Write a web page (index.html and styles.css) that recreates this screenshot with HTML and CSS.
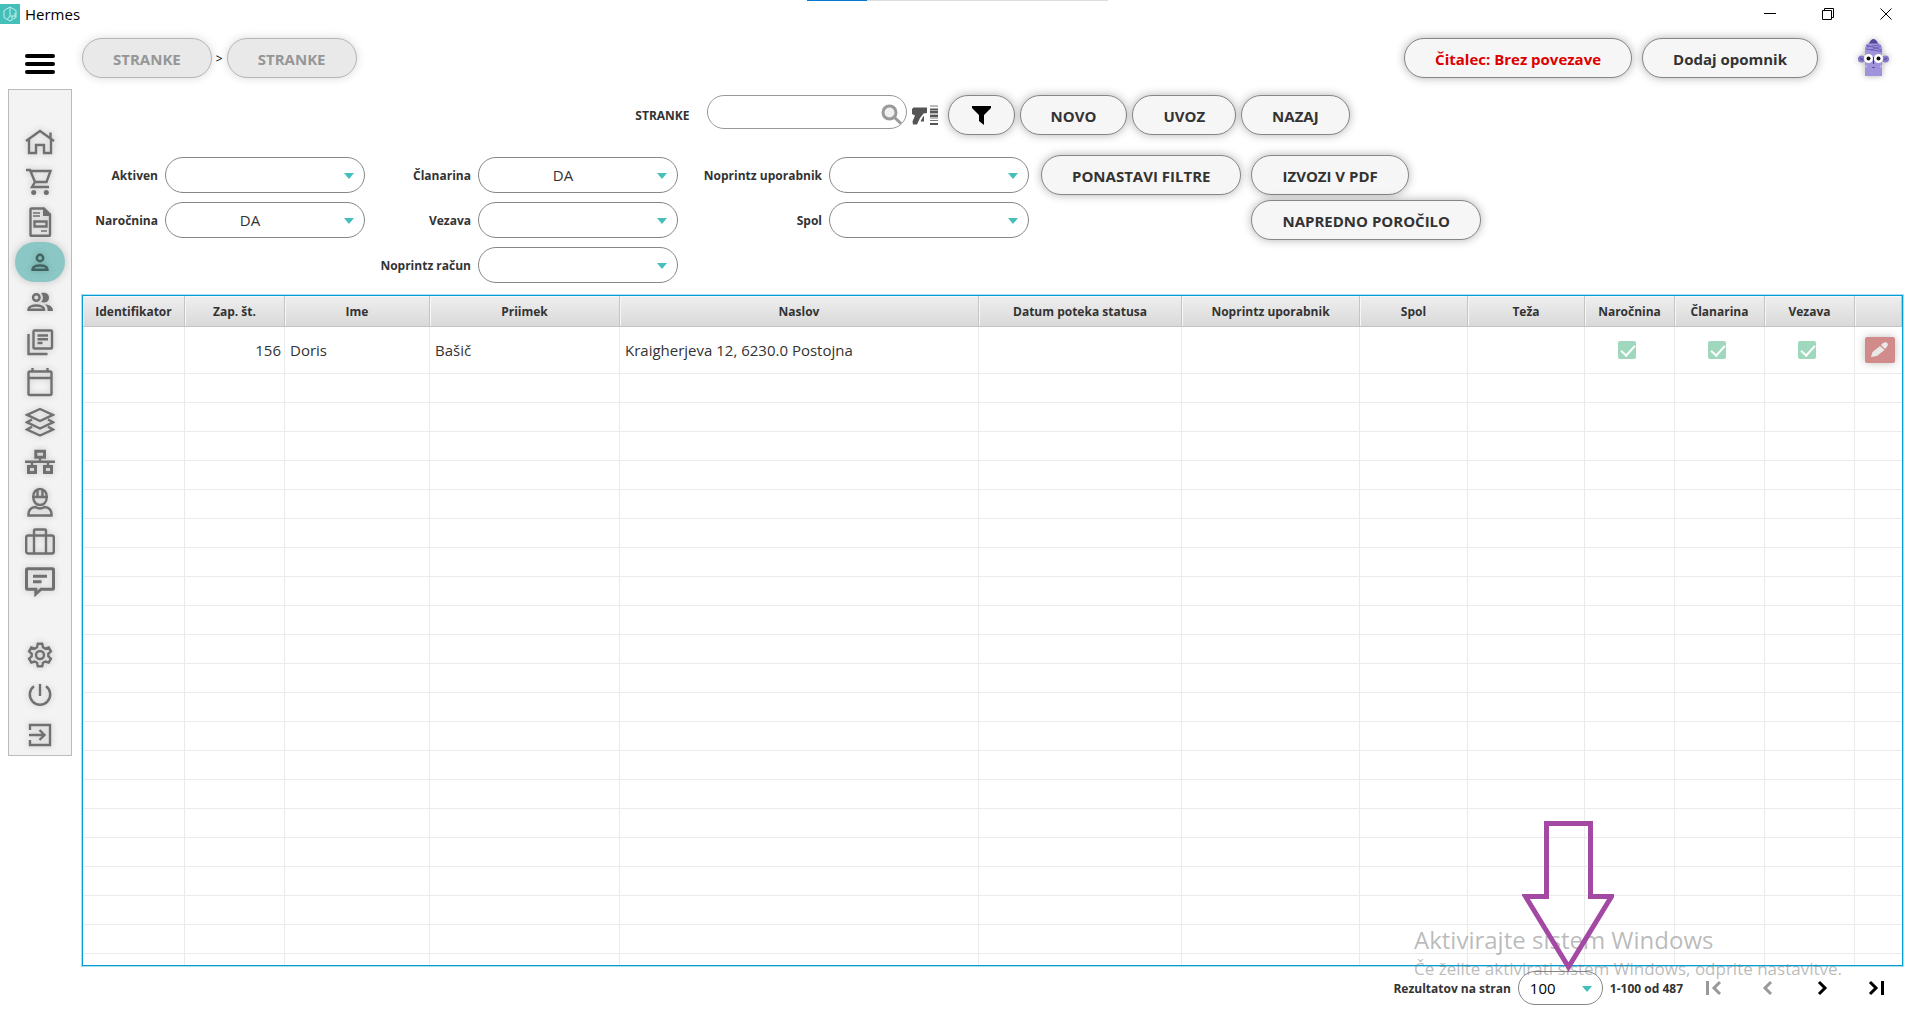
FILE: index.html
```html
<!DOCTYPE html>
<html lang="sl">
<head>
  <meta charset="UTF-8" />
  <meta name="viewport" content="width=device-width, initial-scale=1.0" />
  <title>Hermes</title>
  <link rel="stylesheet" href="styles.css">
</head>
<body>
  <div class="progress"><span></span></div>
  <div class="titlebar">
    <svg class="logo" viewBox="0 0 20 20" width="20" height="20">
      <rect width="20" height="20" fill="#45bfb9"/>
      <path d="M10 3v9M10 3L4 6.500v7L10 17l2-1v-4h-2l-2.500 3M10 3l6 3.500v7l-3 1.500M15 9v4M12 12h3" fill="none" stroke="#c5efec"/>
    </svg>
    <span class="app-name">Hermes</span>
    <div class="window-buttons">
      <button aria-label="Minimiraj"><svg viewBox="0 0 12 12" width="12" height="12"><path d="M0 5.500h12"/></svg></button>
      <button aria-label="Obnovi"><svg viewBox="0 0 12 12" width="12" height="12"><path d="M.5 2.500h9v9h-9zM2.500 2.500v-2h9v9h-2"/></svg></button>
      <button aria-label="Zapri"><svg viewBox="0 0 12 12" width="12" height="12"><path d="M.5.5l11 11M11.500.5l-11 11"/></svg></button>
    </div>
  </div>

  <div class="app">
    <aside>
      <button class="menu-toggle" aria-label="Meni"><span></span><span></span><span></span></button>
      <nav class="sidebar">
        <a href="#" aria-label="Domov"><svg viewBox="0 0 30 30"><path d="M1 14L15 4l14 10M4 12.500V26h7v-8h8v8h7V12.500M25.500 5.500v6"/></svg></a>
        <a href="#" aria-label="Prodaja"><svg viewBox="0 0 30 30"><path d="M1 3h4l5 12-3 5h17M6 4h19.500l-4 11H10"/><circle class="fill" cx="8.700" cy="25.500" r="2.500"/><circle class="fill" cx="21.300" cy="25.500" r="2.500"/></svg></a>
        <a href="#" aria-label="Dokumenti"><svg viewBox="0 0 30 30"><path d="M6.500 1.500H19l6 6V28a.8.8 0 0 1-.8.8H6.300a.8.8 0 0 1-.8-.8V2.500a1 1 0 0 1 1-1zM9.500 14.500h12v5h-12z"/><path class="fill" d="M18 1l8 8h-8z"/><path class="thin" d="M8 6h7M8 9h7M16 24h6"/></svg></a>
        <a href="#" class="active" aria-label="Stranke"><svg viewBox="0 0 30 30"><circle cx="15" cy="11" r="3.200"/><path d="M7.500 22.800c0-3 3.500-4.300 7.500-4.300s7.500 1.300 7.500 4.300z"/></svg></a>
        <a href="#" aria-label="Skupine"><svg viewBox="0 0 30 30"><circle cx="11.300" cy="10.500" r="3.300"/><path d="M3.500 22.800c0-3 4-4.300 7.800-4.300s7.800 1.300 7.800 4.300z"/><path class="fill" d="M16 6.300c5-1.500 8 1 8 4.400s-3 6-8 4.400c2.600-2.500 2.600-6 0-8.800zM20 17.300c5 .5 8 2.700 8 6.700h-5.500c.3-3-.5-5-2.500-6.700z"/></svg></a>
        <a href="#" aria-label="Knjižnica"><svg viewBox="0 0 30 30"><rect x="8.500" y="3.500" width="18.500" height="18" rx="1"/><path d="M3.500 7v20h19"/><path d="M12.500 8.500h10.500M12.500 12.300h10.500M12.500 16h5"/></svg></a>
        <a href="#" aria-label="Koledar"><svg viewBox="0 0 30 30"><rect x="3.500" y="4.500" width="23" height="23.500" rx="1.500"/><path d="M3.500 11h23M7.500 1v4M22.500 1v4"/></svg></a>
        <a href="#" aria-label="Sloji"><svg viewBox="0 0 30 30"><path d="M15 2l13 5.800L15 14 2 7.800zM7 12.500L2 15.300l13 6.200 13-6.200-5-2.800M7 19.800l-5 2.700 13 6 13-6-5-2.700"/></svg></a>
        <a href="#" aria-label="Struktura"><svg viewBox="0 0 30 30"><path d="M10.800 4.300h8.700v6h-8.700zM3.500 19.500h7v6h-7zM19.500 19.500h7v6h-7z" class="bold"/><path d="M0 14.800h30M15 11v4M7 15v4M23 15v4"/></svg></a>
        <a href="#" aria-label="Zaposleni"><svg viewBox="0 0 30 30"><path d="M7 10h16M8.300 10c-.5-5 3-8 6.700-8s7.200 3 6.700 8c0 5-3 8-6.700 8s-6.700-3-6.700-8zM12.500 3v6M17.500 3v6M3.500 28.500c-.5-5 2.500-8.500 7-8.500 3 2 6 2 9 0 4.500 0 7.500 3.500 7 8.500z"/></svg></a>
        <a href="#" aria-label="Kovček"><svg viewBox="0 0 30 30"><rect x="1.200" y="8.500" width="27.600" height="18" rx="2"/><path d="M9 26V3.500a1 1 0 0 1 1-1h10a1 1 0 0 1 1 1V26"/></svg></a>
        <a href="#" aria-label="Sporočila"><svg viewBox="0 0 30 30"><path class="bold" d="M2.500 1.800h25a1 1 0 0 1 1 1v18.400a1 1 0 0 1-1 1H16L10.800 27v-4.800H2.500a1 1 0 0 1-1-1V2.800a1 1 0 0 1 1-1zM8 9.300h14M8 14.700h8.500"/></svg></a>
        <a href="#" class="settings" aria-label="Nastavitve"><svg viewBox="0 0 30 30"><circle cx="15" cy="15" r="4"/><path d="M12.800 3.800h4.400l.8 3.500 2.200 1.300 3.500-1.100 2.200 3.800-2.600 2.500v2.500l2.600 2.400-2.200 3.800-3.500-1-2.200 1.200-.8 3.500h-4.400l-.8-3.500-2.200-1.200-3.500 1-2.200-3.800 2.600-2.400v-2.500l-2.600-2.500 2.200-3.800 3.500 1.100L12 7.300z"/></svg></a>
        <a href="#" aria-label="Izklop"><svg viewBox="0 0 30 30"><path d="M9 6.300a10.200 10.200 0 1 0 12 0M15 4v12"/></svg></a>
        <a href="#" aria-label="Odjava"><svg viewBox="0 0 30 30"><path d="M5 10V5h20v20H5v-5M4 15h15M14.500 10l5 5-5 5"/></svg></a>
      </nav>
    </aside>

    <main>
      <header>
        <button class="pill crumb">STRANKE</button>
        <span class="separator">&gt;</span>
        <button class="pill crumb">STRANKE</button>
        <div class="header-right">
          <button class="pill reader">Čitalec: Brez povezave</button>
          <button class="pill">Dodaj opomnik</button>
          <svg class="avatar" viewBox="0 0 31 38" width="31" height="38">
            <path d="M7 37V10c0-5 4-6.500 8.500-6.500S24 5 24 10v27z" fill="#a093dc"/>
            <path d="M11 4.500C12 1.500 14 0 15.500 0s3.500 1.500 4.500 4.500z" fill="#54469a"/>
            <path d="M8 6l16 5M8 10l16 2.500M9 8l12-2M13 11l10-4" stroke="#6e5fb7" fill="none"/>
            <circle cx="3.500" cy="20" r="3.500" fill="#8878cd"/><circle cx="27.500" cy="20" r="3.500" fill="#8878cd"/>
            <path d="M2 19l3 2M29 19l-3 2" stroke="#473a80"/>
            <circle cx="10.500" cy="19.500" r="4.500" fill="#fff"/><circle cx="20.500" cy="19.500" r="4.500" fill="#fff"/>
            <circle cx="10.500" cy="19.500" r="2" fill="#111"/><circle cx="20.500" cy="19.500" r="2" fill="#111"/>
            <path d="M15.500 18v7M14.500 28.500h2" stroke="#443878"/>
            <path d="M8 26v3M23 26v3" stroke="#cfc8f5"/>
          </svg>
        </div>
      </header>

      <div class="toolbar">
        <label class="search-label" for="search">STRANKE</label>
        <div class="search">
          <input type="text" id="search">
          <svg viewBox="0 0 22 22" width="22" height="22"><circle cx="8.500" cy="8.500" r="6.500" fill="#f0f0f0"/><path d="M13.500 13.500l6.500 6"/></svg>
        </div>
        <svg class="scanner" viewBox="0 0 26 20" width="26" height="20">
          <path d="M0 4l1.500-1.500H15v5.500l-3.500.5L8 13l-3 6.500H1L.5 16.500 3 10.500 0 9zM10 13.500l2-3v6H8.500z" fill="#555"/>
          <path d="M18 1h8M18 9h8M18 13h8M18 15.500h8" stroke="#777"/><path d="M18 4.500h8M18 7h8M18 11h8M18 19h8" stroke="#555" stroke-width="2"/>
        </svg>
        <div class="toolbar-buttons">
          <button class="pill" aria-label="Filter"><svg viewBox="0 0 19 19" width="19" height="19"><path d="M0 0h19v2l-7 7v10l-5-4V9L0 2z"/></svg></button>
          <button class="pill">NOVO</button>
          <button class="pill">UVOZ</button>
          <button class="pill">NAZAJ</button>
        </div>
      </div>

      <div class="filters">
        <div class="filter-group">
          <label for="aktiven">Aktiven</label>
          <div class="select"><select id="aktiven"><option></option><option>DA</option><option>NE</option></select></div>
          <label for="narocnina">Naročnina</label>
          <div class="select"><select id="narocnina"><option></option><option selected>DA</option><option>NE</option></select></div>
        </div>
        <div class="filter-group medium">
          <label for="clanarina">Članarina</label>
          <div class="select"><select id="clanarina"><option></option><option selected>DA</option><option>NE</option></select></div>
          <label for="vezava">Vezava</label>
          <div class="select"><select id="vezava"><option></option><option>DA</option><option>NE</option></select></div>
          <label for="racun">Noprintz račun</label>
          <div class="select"><select id="racun"><option></option><option>DA</option><option>NE</option></select></div>
        </div>
        <div class="filter-group wide">
          <label for="uporabnik">Noprintz uporabnik</label>
          <div class="select"><select id="uporabnik"><option></option><option>DA</option><option>NE</option></select></div>
          <label for="spol">Spol</label>
          <div class="select"><select id="spol"><option></option><option>M</option><option>Ž</option></select></div>
        </div>
        <div class="filter-actions">
          <button class="pill">PONASTAVI FILTRE</button>
          <div class="export-buttons">
            <button class="pill">IZVOZI V PDF</button>
            <button class="pill">NAPREDNO POROČILO</button>
          </div>
        </div>
      </div>

      <div class="table-box">
        <table>
          <colgroup>
            <col class="w-102"><col class="w-100"><col class="w-145"><col class="w-190"><col><col class="w-203">
            <col class="w-178"><col class="w-108"><col class="w-117"><col class="w-90"><col class="w-90"><col class="w-90"><col class="w-47">
          </colgroup>
          <thead>
            <tr>
              <th>Identifikator</th><th>Zap. št.</th><th>Ime</th><th>Priimek</th><th>Naslov</th><th>Datum poteka statusa</th>
              <th>Noprintz uporabnik</th><th>Spol</th><th>Teža</th><th>Naročnina</th><th>Članarina</th><th>Vezava</th><th></th>
            </tr>
          </thead>
          <tbody id="rows">
            <tr class="data">
              <td></td><td class="number">156</td><td>Doris</td><td>Bašič</td><td>Kraigherjeva 12, 6230.0 Postojna</td><td></td>
              <td></td><td></td><td></td>
              <td class="check"><input type="checkbox" aria-label="Naročnina" checked></td>
              <td class="check"><input type="checkbox" aria-label="Članarina" checked></td>
              <td class="check"><input type="checkbox" aria-label="Vezava" checked></td>
              <td><button class="edit" aria-label="Uredi"><svg viewBox="0 0 18 16" width="18" height="16"><path d="M0 15l1.500-5L9 4l4.500 4L6 14zM10 3l2-2 3-1 2 2-.5 2-2.500 3z"/></svg></button></td>
            </tr>
          </tbody>
        </table>
      </div>

      <footer>
        <label for="perPage">Rezultatov na stran</label>
        <div class="select small"><select id="perPage"><option>50</option><option selected>100</option></select></div>
        <span class="range">1-100 od 487</span>
        <div class="pages">
          <button disabled aria-label="Prva"><svg viewBox="0 0 16 16" width="16" height="16"><path d="M1.500 1v14M14 2L8 8l6 6"/></svg></button>
          <button disabled aria-label="Prejšnja"><svg viewBox="0 0 16 16" width="16" height="16"><path d="M11 2L5 8l6 6"/></svg></button>
          <button aria-label="Naslednja"><svg viewBox="0 0 16 16" width="16" height="16"><path d="M5 2l6 6-6 6"/></svg></button>
          <button aria-label="Zadnja"><svg viewBox="0 0 16 16" width="16" height="16"><path d="M2 2l6 6-6 6M14.500 1v14"/></svg></button>
        </div>
        <div class="watermark">
          <p class="big">Aktivirajte sistem Windows</p>
          <p>Če želite aktivirati sistem Windows, odprite nastavitve.</p>
        </div>
        <svg class="arrow" viewBox="0 0 92 152" width="92" height="152"><path d="M24.500 3.500h44v73h21L46.500 147 3.500 76.500h21z"/></svg>
      </footer>
    </main>
  </div>

  <script>
    // fill the table with empty rows
    const rows = document.getElementById("rows");
    for (let i = 0; i < 21; i++) {
      const tr = document.createElement("tr");
      for (let j = 0; j < 13; j++) tr.appendChild(document.createElement("td"));
      rows.appendChild(tr);
    }
  </script>
</body>
</html>
```

FILE: styles.css
```css
* {
  box-sizing: border-box;
}
body {
  margin: 0;
  font-family: "Open Sans", "Noto Sans", sans-serif;
  font-size: 15px;
  color: #333;
  background: #fff;
}
button, input, select {
  font-family: inherit;
  font-size: 15px;
  color: #333;
}
button {
  cursor: pointer;
  padding: 0;
  border: none;
  background: none;
}
.progress {
  position: absolute;
  top: 0;
  left: 42.1%;
  width: 301px;
  height: 1px;
  background: #ddd;
}
.progress span {
  display: block;
  width: 60px;
  height: 1px;
  background: #0078d7;
}
.titlebar {
  display: flex;
  align-items: center;
  height: 28px;
}
.app-name {
  margin-left: 5px;
  color: #000;
}
.window-buttons {
  display: flex;
  gap: 46px;
  margin-left: auto;
  padding-right: 25px;
}
.window-buttons svg {
  display: block;
  fill: none;
  stroke: #000;
}
.app {
  display: flex;
}
aside {
  width: 82px;
  padding: 26px 10px 0 8px;
}
.menu-toggle {
  display: flex;
  flex-direction: column;
  gap: 4px;
  width: 30px;
  margin: 0 0 15px 17px;
}
.menu-toggle span {
  height: 4px;
  border-radius: 2px;
  background: #000;
}
.sidebar {
  display: flex;
  flex-direction: column;
  align-items: center;
  padding: 32px 0 0;
  background: #f3f3f3;
  border: 1px solid #bbb;
}
.sidebar a {
  display: flex;
  align-items: center;
  justify-content: center;
  width: 50px;
  height: 40px;
  border-radius: 20px;
}
.sidebar a.active {
  background: #8bc8c5;
  box-shadow: 0 0 8px rgba(0, 0, 0, 0.2);
}
.sidebar a.settings {
  margin-top: 33px;
}
.sidebar svg {
  width: 30px;
  height: 30px;
  fill: none;
  stroke: #707070;
  stroke-width: 2.4;
  filter: drop-shadow(0 0 3px rgba(0, 0, 0, 0.2));
}
.sidebar .active svg {
  stroke: #426462;
}
.sidebar .fill {
  fill: #707070;
  stroke: none;
}
.sidebar .thin {
  stroke-width: 1.4;
}
.sidebar .bold {
  stroke-width: 3;
}
main {
  flex: 1;
  min-width: 0;
  padding: 10px 14px 0 0;
}
.pill {
  height: 40px;
  padding: 1px 30px 0;
  font-weight: bold;
  white-space: nowrap;
  background: #f6f6f6;
  border: 1px solid #868686;
  border-radius: 20px;
  box-shadow: 0 0 10px rgba(0, 0, 0, 0.3);
}
.pill svg {
  display: block;
}
.pill.crumb {
  color: #969696;
  background: #e9e9e9;
  border-color: #b5b5b5;
  box-shadow: 0 0 10px rgba(0, 0, 0, 0.15);
}
.pill.reader {
  color: #dc0000;
}
header {
  display: flex;
  align-items: center;
}
.separator {
  width: 15px;
  text-align: center;
  font-size: 12px;
  color: #000;
}
.header-right {
  display: flex;
  align-items: center;
  gap: 10px;
  margin-left: auto;
  padding-right: 14px;
}
.avatar {
  margin-left: 30px;
  filter: drop-shadow(0 0 3px rgba(0, 0, 0, 0.3));
}
.toolbar {
  display: flex;
  justify-content: center;
  margin-top: 17px;
}
label, .range {
  font-size: 12px;
  font-weight: bold;
  white-space: nowrap;
}
.search-label {
  line-height: 41px;
  margin-right: 17px;
}
.search {
  position: relative;
  width: 200px;
  height: 34px;
}
.search input {
  width: 100%;
  height: 34px;
  padding: 0 30px 0 15px;
  border: 1px solid #999;
  border-radius: 17px;
}
.search svg {
  position: absolute;
  top: 9px;
  right: 4px;
  fill: none;
  stroke: #999;
  stroke-width: 3;
}
.scanner {
  margin: 10px 10px 0 5px;
}
.toolbar-buttons {
  display: flex;
  gap: 5px;
}
.toolbar-buttons .pill:first-child {
  padding: 0 23px;
}
.filters {
  display: flex;
  gap: 12px;
  margin-top: 19px;
}
.filter-group {
  display: grid;
  grid-template-columns: 76px 200px;
  grid-auto-rows: 36px;
  align-items: center;
  gap: 9px 7px;
  padding-top: 2px;
  text-align: right;
}
.filter-group.medium {
  grid-template-columns: 94px 200px;
}
.filter-group.wide {
  grid-template-columns: 132px 200px;
}
.select {
  position: relative;
}
.select::after {
  content: "";
  position: absolute;
  top: 50%;
  right: 11px;
  margin-top: -2px;
  border: 5px solid transparent;
  border-top: 6px solid #45bfb9;
  border-bottom: none;
  pointer-events: none;
}
.select select {
  display: block;
  width: 100%;
  height: 36px;
  padding: 0 30px 0 0;
  appearance: none;
  text-align: center;
  text-align-last: center;
  background: #fff;
  border: 1px solid #868686;
  border-radius: 18px;
}
.select.small select {
  width: 85px;
  height: 34px;
  padding: 0 0 0 11px;
  text-align: left;
  text-align-last: left;
  color: #000;
}
.filter-actions {
  display: flex;
  align-items: flex-start;
  gap: 10px;
}
.export-buttons {
  display: flex;
  flex-direction: column;
  align-items: flex-start;
  gap: 5px;
}
.table-box {
  height: 671px;
  margin-top: 12px;
  overflow: hidden;
  border: 1px solid #039ed3;
  box-shadow: 0 0 0 1px #a9def0;
}
table {
  width: 100%;
  table-layout: fixed;
  border-collapse: separate;
  border-spacing: 0;
}
.w-47 { width: 47px; }
.w-90 { width: 90px; }
.w-100 { width: 100px; }
.w-102 { width: 102px; }
.w-108 { width: 108px; }
.w-117 { width: 117px; }
.w-145 { width: 145px; }
.w-178 { width: 178px; }
.w-190 { width: 190px; }
.w-203 { width: 203px; }
th {
  height: 31px;
  padding: 1px 0 0;
  font-size: 12px;
  background: linear-gradient(#efefef, #d9d9d9);
  border-right: 1px solid #c4c4c4;
  border-bottom: 1px solid #c4c4c4;
  box-shadow: inset 1px 1px #f7f7f7;
}
td {
  height: 29px;
  padding: 0 3px 0 5px;
  border-right: 1px solid #ebebeb;
  border-bottom: 1px solid #ebebeb;
}
td:last-child {
  border-right: none;
}
.data td {
  height: 47px;
}
td.number {
  text-align: right;
}
td.check {
  padding: 0 6px 0 0;
}
td input {
  position: relative;
  display: block;
  width: 18px;
  height: 18px;
  margin: 0 auto;
  appearance: none;
  background: #9fd8bc;
  border-radius: 2px;
}
td input:checked::after {
  content: "";
  position: absolute;
  top: 1px;
  left: 6px;
  width: 6px;
  height: 12px;
  border: solid #fff;
  border-width: 0 2px 2px 0;
  transform: rotate(42deg);
}
.edit {
  display: flex;
  align-items: center;
  justify-content: center;
  width: 30px;
  height: 26px;
  margin: 0 auto;
  background: #d28b8b;
  border-radius: 2px;
  box-shadow: 0 0 8px rgba(0, 0, 0, 0.25);
}
.edit svg {
  fill: #e8e8e8;
}
footer {
  position: relative;
  display: flex;
  align-items: center;
  justify-content: flex-end;
  gap: 7px;
  margin-top: 5px;
  padding-right: 19px;
}
.pages {
  display: flex;
  gap: 38px;
  margin-left: 16px;
}
.pages svg {
  display: block;
  fill: none;
  stroke: #000;
  stroke-width: 3;
}
.pages button:disabled svg {
  stroke: #999;
}
/* lies over the bottom of the table */
.watermark {
  position: absolute;
  right: 61px;
  bottom: 23px;
  color: rgba(120, 120, 120, 0.5);
  white-space: nowrap;
  pointer-events: none;
}
.watermark p {
  margin: 0;
  font-size: 17px;
  line-height: 26px;
}
.watermark .big {
  font-size: 24px;
  line-height: 32px;
}
.arrow {
  position: absolute;
  right: 289px;
  bottom: 33px;
  fill: none;
  stroke: #a349a4;
  stroke-width: 5;
  pointer-events: none;
}
```
